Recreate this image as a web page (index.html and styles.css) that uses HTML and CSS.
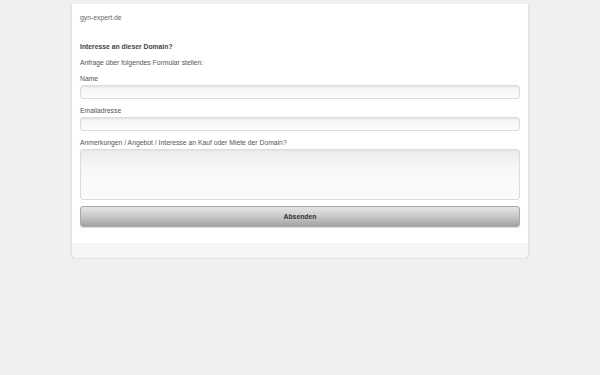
FILE: index.html
```html
<!DOCTYPE html>
<html lang="de">
<head>
    <meta charset="UTF-8">
    <meta name="viewport" content="width=device-width, initial-scale=1.0">
    <title>gyn-expert.de</title>
    <link rel="stylesheet" href="styles.css">
</head>
<body>

    <div class="page">
        <div class="content">
            <div class="domain">gyn-expert.de</div>

            <h1 class="title">Interesse an dieser Domain?</h1>
            <p class="intro">Anfrage über folgendes Formular stellen:</p>

            <form class="contact-form">
                <label for="name">Name</label>
                <input type="text" id="name" name="name">

                <label for="email">Emailadresse</label>
                <input type="email" id="email" name="email">

                <label for="message">Anmerkungen / Angebot / Interesse an Kauf oder Miete der Domain?</label>
                <textarea id="message" name="message"></textarea>

                <button type="submit" class="send-btn">Absenden</button>
            </form>
        </div>
        <div class="footer"></div>
    </div>

</body>
</html>
```

FILE: styles.css
```css
body {
    margin: 0;
    padding: 0;
    background-color: #f0f0f0;
    font-family: "Liberation Sans", Arial, sans-serif;
    font-size: 6.8px;
    color: #555;
}

.page {
    width: 456px;
    margin: 4px 0 0 71px;
    background-color: white;
    border: 1px solid #e2e2e2;
    border-top: none;
    border-radius: 0 0 6px 6px;
    box-shadow: 0 1px 3px rgba(0, 0, 0, 0.08);
    overflow: hidden;
}

.content {
    padding: 10px 8px 16px 8px;
}

.domain {
    line-height: 8px;
    color: #666;
}

.title {
    margin: 21px 0 0 0;
    font-size: 6.8px;
    line-height: 8px;
    font-weight: bold;
    color: #444;
}

.intro {
    margin: 8px 0 0 0;
    line-height: 8px;
}

.contact-form {
    display: flex;
    flex-direction: column;
    margin-top: 7px;
}

.contact-form label {
    display: block;
    line-height: 8px;
    padding-top: 1px;
    margin-bottom: 2px;
}

.contact-form input,
.contact-form textarea {
    box-sizing: border-box;
    width: 100%;
    height: 14px;
    margin: 0 0 7px 0;
    padding: 2px 4px;
    border: 1px solid #dcdcdc;
    border-radius: 3px;
    background: linear-gradient(to bottom, #ececec, #f8f8f8 40%, #fbfbfb);
    box-shadow: inset 0 1px 2px rgba(0, 0, 0, 0.04);
    font-family: inherit;
    font-size: 7px;
}

.contact-form textarea {
    height: 51px;
    margin-bottom: 6px;
    resize: none;
}

.send-btn {
    box-sizing: border-box;
    width: 100%;
    height: 21px;
    padding: 0;
    border: 1px solid #a8a8a8;
    border-radius: 3px;
    background: linear-gradient(to bottom, #e6e6e6, #c8c8c8 50%, #a2a2a2);
    box-shadow: 0 1px 1px rgba(0, 0, 0, 0.15);
    font-family: inherit;
    font-size: 6.8px;
    font-weight: bold;
    color: #333;
    cursor: pointer;
}

.footer {
    height: 15px;
    background-color: #f6f6f6;
}
```
